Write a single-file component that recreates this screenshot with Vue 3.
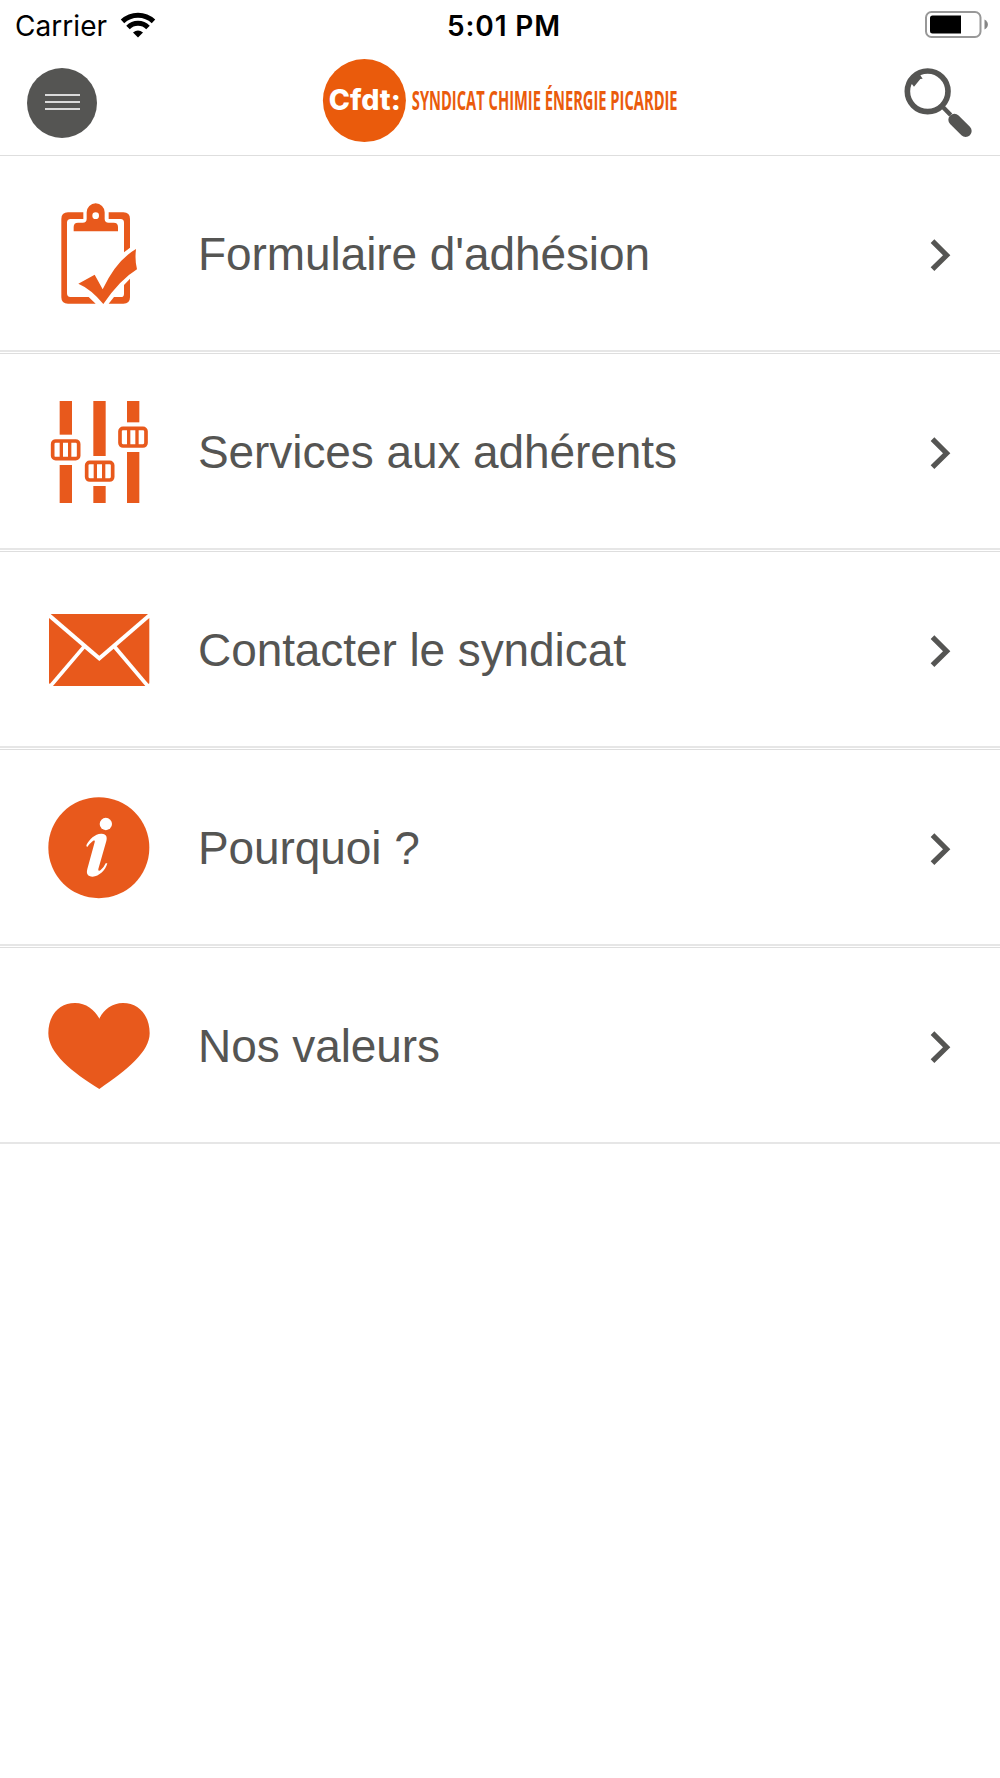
<script setup>
const items = [
  { id: 'form', label: "Formulaire d'adhésion", view: '0 9 360 360' },
  { id: 'services', label: 'Services aux adhérents', view: '0 3 360 360' },
  { id: 'contact', label: 'Contacter le syndicat', view: '0 -33 360 360' },
  { id: 'why', label: 'Pourquoi ?', view: '0 6 360 360' },
  { id: 'values', label: 'Nos valeurs', view: '0 -15 360 360' },
]
const sliders = [
  { x: 60, top: 133, bottom: 225, bx: 36, by: 150 },
  { x: 161, top: 197, bottom: 288, bx: 138, by: 214 },
  { x: 262, top: 96, bottom: 186, bx: 238, by: 112 },
]
</script>

<template>
  <div class="screen">
    <header>
      <div class="status">
        <div class="carrier">
          <span>Carrier</span>
          <svg class="wifi" width="36" height="26" viewBox="0 0 36 26">
            <g fill="none" stroke="#000" stroke-width="5">
              <path d="M2.500 9.400A22.500 22.500 0 0 1 33.500 9.400" />
              <path d="M8 15.400A14.200 14.200 0 0 1 28 15.400" />
            </g>
            <path d="M13 20.600A8 8 0 0 1 23 20.600L18 25.500Z" />
          </svg>
        </div>
        <div class="time">5:01 PM</div>
        <svg class="battery" width="64" height="28" viewBox="0 0 64 28">
          <rect x="2" y="2" width="54.500" height="25" rx="5.500" fill="none" stroke="#989898" stroke-width="2" />
          <path d="M8.500 5.500H37V23.500H8.500Q6 23.500 6 21V8Q6 5.500 8.500 5.500Z" />
          <path d="M60.500 9.500Q63.900 11.500 63.900 14.500T60.500 19.500Z" fill="#858585" />
        </svg>
      </div>
      <div class="nav">
        <button class="menu" aria-label="Menu"><i /><i /><i /></button>
        <svg class="logo" width="380" height="86" viewBox="310 57 380 86">
          <circle cx="364.400" cy="100.600" r="41.500" fill="#ea5b0c" />
          <text x="328.800" y="110.300" class="brand" textLength="72" lengthAdjust="spacingAndGlyphs">Cfdt:</text>
          <text transform="translate(411.800 110.300) scale(.6 1)" class="union" textLength="443" lengthAdjust="spacingAndGlyphs">SYNDICAT CHIMIE ÉNERGIE PICARDIE</text>
        </svg>
        <svg class="search" width="72" height="72" viewBox="0 195 216 216">
          <g transform="translate(-69 0)" fill="none" stroke="#555553">
            <circle cx="143" cy="274" r="61" stroke-width="17" />
            <path d="M185 317L212 345" stroke-width="13" />
            <path d="M223 359L257 393" stroke-width="36" stroke-linecap="round" />
            <path fill="#555553" stroke="none" d="M86 248L100 232L119 223L128 236L121 237L102 260L95 251L88 262Z" />
          </g>
        </svg>
      </div>
    </header>
    <main>
      <a v-for="item in items" :key="item.id" class="row">
        <svg class="icon" :viewBox="item.view" fill="#e8591c">
          <g v-if="item.id === 'form'">
            <path d="M130 67H84Q64 67 64 87V322Q64 341 84 341H167L146 321H91Q81 321 81 310V98Q81 87 92 87H130Z" />
            <path d="M206 67H250Q270 67 270 87V173L252 187V98Q252 87 242 87H206Z" />
            <path d="M270 266V322Q270 341 250 341H206L222 321H243Q252 321 252 311V285Z" />
            <path fill-rule="evenodd" d="M101 124V111Q101 98 114 98H128Q140 98 140 87V67A27 27 0 0 1 194 67V87Q194 98 206 98H221Q234 98 234 111V124ZM157 77a10 10 0 1 0 20 0a10 10 0 1 0 -20 0" />
            <path d="M115 281L164 254L188 298Q229 211 288 177Q284 212 291 238Q240 269 190 342Q153 297 115 281Z" />
          </g>
          <g v-else-if="item.id === 'services'">
            <template v-for="s in sliders" :key="s.x">
              <rect :x="s.x - 1" y="33" width="37" :height="s.top - 32" />
              <rect :x="s.x - 1" :y="s.bottom" width="37" :height="339 - s.bottom" />
              <rect :x="s.bx + 2" :y="s.by + 3" width="78" height="53" rx="9" fill="#fff" stroke="#e8591c" stroke-width="11" />
              <path :d="`M${s.bx + 28} ${s.by + 4}v51M${s.bx + 53} ${s.by + 4}v51`" stroke="#e8591c" stroke-width="10" />
            </template>
          </g>
          <g v-else-if="item.id === 'contact'">
            <path d="M32 42H324L178 167Z" />
            <path d="M27 54L126 139L30 251Q27 252 27 248Z" />
            <path d="M328 54L230 139L325 251Q328 252 328 248Z" />
            <path d="M134 146L178 183L221 146L316 258H39Z" />
          </g>
          <g v-else-if="item.id === 'why'">
            <circle cx="176.500" cy="188" r="151.500" />
            <g fill="#fff">
              <circle cx="197.500" cy="117" r="18.500" />
              <path d="M139 181C148 162 165 147 183 146C200 145 202 157 199 168L175 252C174 258 178 259 182 255Q192 247 197 235H202C197 255 177 275 158 275C143 275 138 266 142 252L164 172C166 164 161 166 156 170Q147 177 141 187Z" />
            </g>
          </g>
          <path v-else d="M178 86C165 61 139 39 105 39C56 39 25 77 25 130C25 189 96 247 178 297C262 239 329 185 329 130C329 77 297 39 249 39C216 39 191 59 178 86Z" />
        </svg>
        <span class="label">{{ item.label }}</span>
        <svg class="chevron" viewBox="0 8 300 180">
          <path fill="#555553" d="M103 57L151 104.500L103 152L92 141L129 104.500L92 68Z" />
        </svg>
      </a>
    </main>
  </div>
</template>

<style>
body { background: #fff; }
</style>

<style scoped>
.screen { width: 1000px; min-height: 1778px; background: #fff; }
header { height: 155px; }
.status { height: 50px; display: grid; grid-template-columns: 1fr auto 1fr; align-items: center; font-family: Inter, sans-serif; font-size: 28px; line-height: 50px; color: #000; }
.carrier { display: flex; align-items: center; padding: 1px 0 0 15px; }
.carrier span { width: 93px; white-space: nowrap; letter-spacing: 0.05px; }
.wifi { margin-left: 12px; margin-bottom: 3px; }
.time { font-weight: 600; padding: 1px 0 0 8px; letter-spacing: 0.9px; }
.battery { justify-self: end; margin: 0 12px 3px 0; }
.nav { height: 105px; display: flex; align-items: flex-start; padding: 7px 25px 0 27px; box-sizing: border-box; }
.menu { flex: none; width: 70px; height: 70px; margin: 11px 0 0; padding: 0 0 2px; border: 0; border-radius: 50%; background: #555553; display: flex; flex-direction: column; align-items: center; justify-content: center; gap: 5px; box-sizing: border-box; }
.menu i { width: 35px; height: 2px; background: #dadada; }
.logo { flex: none; margin-left: 213px; overflow: visible; }
.brand { font: 800 28px Inter, sans-serif; fill: #fff; }
.union { font: 700 26.5px "Open Sans", sans-serif; fill: #ea5b0c; }
.search { flex: none; margin: 8px 0 0 213px; }
.row { display: flex; align-items: center; box-sizing: border-box; height: 197px; padding-left: 40px; border-top: 1px solid #dedede; border-bottom: 2px solid #e6e6e6; margin-bottom: 1px; color: #555553; }
.icon { width: 120px; height: 120px; flex: none; }
.label { flex: 1; padding: 1px 0 0 38px; font: 46px/60px "Liberation Sans", Arial, sans-serif; letter-spacing: -0.08px; white-space: nowrap; }
.chevron { width: 100px; height: 60px; flex: none; }
</style>
